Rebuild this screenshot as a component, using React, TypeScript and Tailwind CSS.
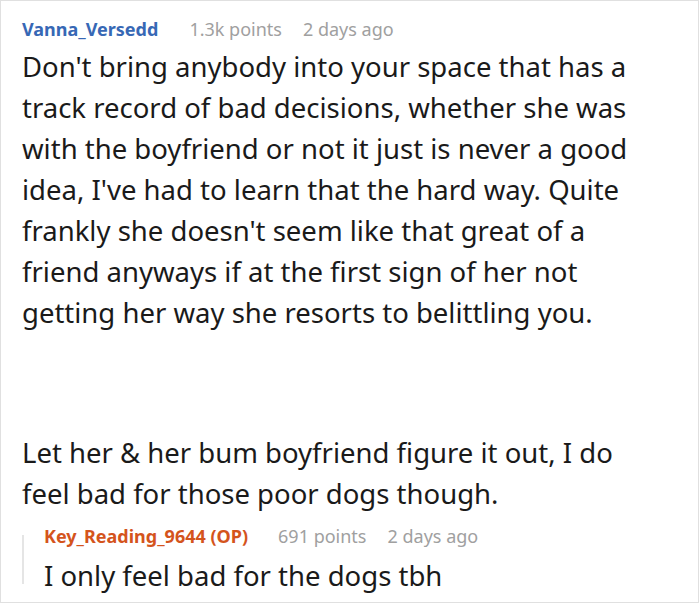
export default function App() {
  return (
    <div className="w-[700px] h-[604px] bg-white" style={{ fontFamily: '"Noto Sans", sans-serif' }}>
      <div className="w-[699px] h-[603px] border border-[#e0e0e0] pl-[21px] pt-[15px] overflow-hidden">
        <div className="flex items-baseline text-[18px] leading-[26px]">
          <span className="font-bold text-[#3768b5]">Vanna_Versedd</span>
          <span className="ml-[31px] text-[#a0a0a0]">1.3k points</span>
          <span className="ml-[21px] text-[#a0a0a0]">2 days ago</span>
        </div>
        <div className="mt-[4px] text-[27.5px] leading-[41px] text-[#1a1a1a] whitespace-nowrap">
          <p>
            Don't bring anybody into your space that has a<br />
            track record of bad decisions, whether she was<br />
            with the boyfriend or not it just is never a good<br />
            idea, I've had to learn that the hard way. Quite<br />
            frankly she doesn't seem like that great of a<br />
            friend anyways if at the first sign of her not<br />
            getting her way she resorts to belittling you.
          </p>
          <p className="mt-[99px]">
            Let her &amp; her bum boyfriend figure it out, I do<br />
            feel bad for those poor dogs though.
          </p>
        </div>
        <div className="mt-[9px] flex items-start">
          <div className="w-[2px] h-[49px] bg-[#e5e5e5] mt-[12px]" />
          <div className="ml-[20px]">
            <div className="flex items-baseline text-[18px] leading-[26px]">
              <span className="font-bold text-[#d4541c]">Key_Reading_9644 (OP)</span>
              <span className="ml-[30px] text-[#a0a0a0]">691 points</span>
              <span className="ml-[21px] text-[#a0a0a0]">2 days ago</span>
            </div>
            <div className="mt-[6px] text-[27.5px] leading-[41px] text-[#1a1a1a]">I only feel bad for the dogs tbh</div>
          </div>
        </div>
      </div>
    </div>
  );
}
